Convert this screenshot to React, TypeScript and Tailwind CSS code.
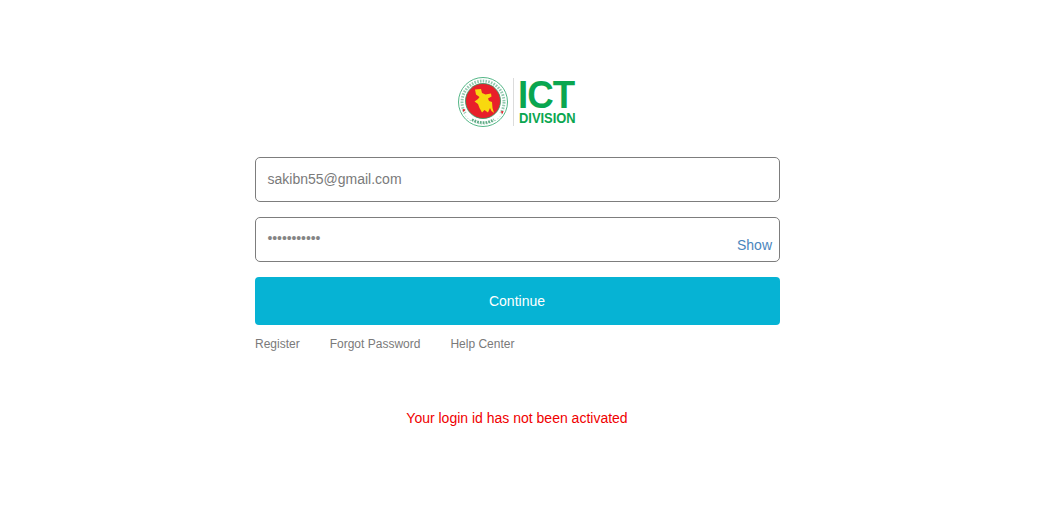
const links = ['Register', 'Forgot Password', 'Help Center'];

function Seal() {
  return (
    <svg width="52" height="52" viewBox="0 0 52 52" className="shrink-0">
      <circle cx="26" cy="26" r="24.5" fill="#fff" stroke="#3fae78" strokeWidth="0.9" />
      <circle cx="26" cy="26" r="21" fill="none" stroke="#4aa77a" strokeWidth="3" strokeDasharray="1.6 1.2" opacity="0.6" />
      <path d="M7 38 A23 23 0 0 0 45 38 L37 33 A14 14 0 0 1 15 33 Z" fill="#fff" />
      <path d="M15 43.5 A21 21 0 0 0 37 43.5" fill="none" stroke="#2a8f5c" strokeWidth="2.6" strokeDasharray="1.8 1" opacity="0.75" />
      <circle cx="26" cy="25" r="17.5" fill="#e8202a" stroke="#2a9a62" strokeWidth="0.8" />
      <path
        d="M18 13.5 L24 13 L25 17 L28.5 18.5 L34 17.5 L34.5 20.5 L31 22.5 L32 25 L35 26 L35.5 32 L37 37 L34.5 35 L33 32 L31 36.5 L27.5 34 L25 36.5 L22.5 32 L21 28 L17.5 25.5 L21 23 L22.5 21 L19 18.5 Z"
        fill="#f8d90f"
      />
      <path d="M5.5 33 l3 .6 -2 2.4 Z M46.5 35 l-3 .6 2 2.4 Z" fill="#e8202a" />
    </svg>
  );
}

function Logo() {
  return (
    <div className="flex h-[52px] items-center pr-[3px]">
      <Seal />
      <div className="ml-[4px] h-[48px] w-px bg-[#dcdcdc]" />
      <div className="ml-[4px] flex w-[58px] flex-col font-['Liberation_Sans',sans-serif] font-bold text-[#0aa650]">
        <span className="h-[29px] origin-left scale-x-[0.94] text-[39px] leading-[29px] tracking-[-1px]">ICT</span>
        <span className="ml-px mt-[2px] h-[13px] origin-left scale-x-[0.86] whitespace-nowrap text-[15px] leading-[13px]">DIVISION</span>
      </div>
    </div>
  );
}

export default function App() {
  return (
    <div className="h-[532px] w-[1064px] bg-white font-['Liberation_Sans',Arial,sans-serif]">
      <div className="flex w-[1035px] flex-col items-center pt-[76px]">
        <Logo />
        <form className="mt-[29px] flex w-[525px] flex-col">
          <div className="flex h-[45px] items-center rounded-[5px] border border-[#7d7d7d] pl-[11.5px] text-[14px] text-[#7a7a7a]">
            sakibn55@gmail.com
          </div>
          <div className="relative mt-[15px] flex h-[45px] items-center rounded-[5px] border border-[#7d7d7d] pl-[11.5px] pb-[3px] text-[14px] tracking-[-0.1px] text-[#858585]">
            •••••••••••
            <a className="absolute bottom-[8px] right-[7px] text-[14px] leading-[15px] tracking-normal text-[#4a86bd]">Show</a>
          </div>
          <button type="button" className="mt-[15px] h-[48px] rounded-[4px] bg-[#06b3d4] pr-px text-[14px] text-white">
            Continue
          </button>
          <div className="mt-[12px] flex gap-[30px] text-[12px] leading-[14px] text-[#7a7a7a]">
            {links.map((label) => (
              <a key={label}>{label}</a>
            ))}
          </div>
        </form>
        <p className="mt-[59px] pr-px text-[14px] leading-[16px] text-[#f00000]">Your login id has not been activated</p>
      </div>
    </div>
  );
}
